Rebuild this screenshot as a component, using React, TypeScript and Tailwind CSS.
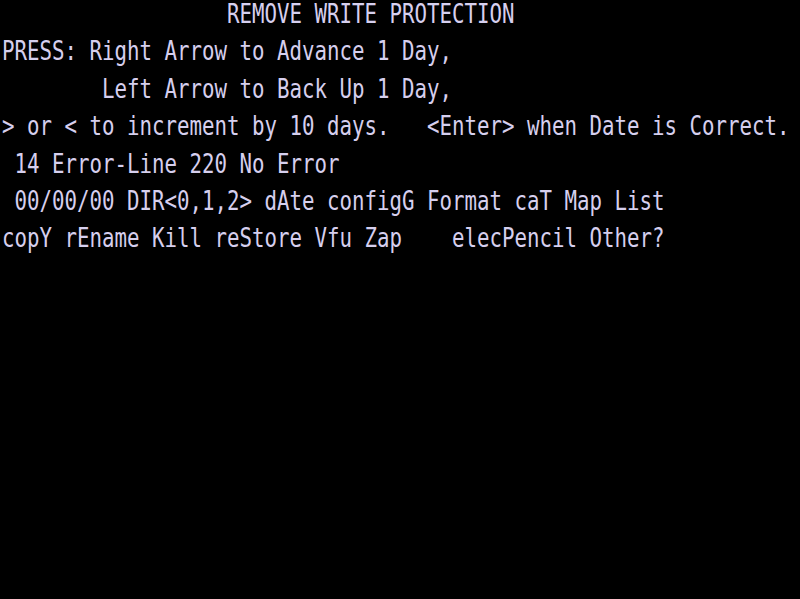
import React from 'react';

const rows = [
  '                  REMOVE WRITE PROTECTION',
  'PRESS: Right Arrow to Advance 1 Day,',
  '        Left Arrow to Back Up 1 Day,',
  '> or < to increment by 10 days.   <Enter> when Date is Correct.',
  ' 14 Error-Line 220 No Error',
  ' 00/00/00 DIR<0,1,2> dAte configG Format caT Map List',
  'copY rEname Kill reStore Vfu Zap    elecPencil Other?',
];

export default function App() {
  return (
    <div className="w-[800px] h-[599px] bg-black overflow-hidden pl-[2px]">
      {rows.map((line, i) => (
        <div key={i} className="h-[37.4px] overflow-visible">
          <span
            className="inline-block origin-top scale-y-[1.32] whitespace-pre text-[20.77px] leading-[18px] text-[#d6cfee]"
            style={{ fontFamily: '"DejaVu Sans Mono", monospace' }}
          >
            {line}
          </span>
        </div>
      ))}
    </div>
  );
}
